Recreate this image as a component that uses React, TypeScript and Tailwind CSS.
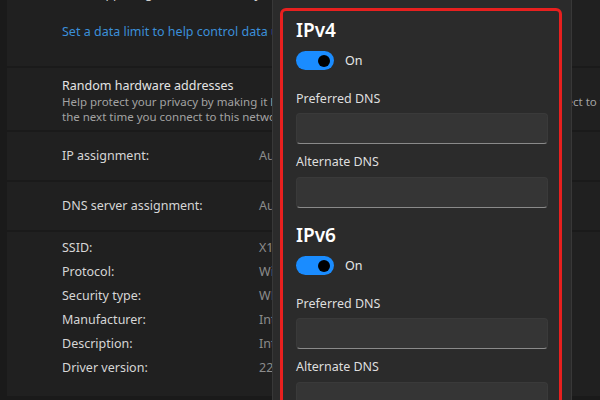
import React from 'react';

const rows: [string, string][] = [
  ['SSID:', 'X1 Carbon Home'],
  ['Protocol:', 'Wi-Fi 6 (802.11ax)'],
  ['Security type:', 'WPA2-Personal'],
  ['Manufacturer:', 'Intel Corporation'],
  ['Description:', 'Intel(R) Wi-Fi 6 AX201 160MHz'],
  ['Driver version:', '22.150.0.3'],
];

const Toggle = () => (
  <div className="flex items-center gap-[11px]">
    <div className="w-[38px] h-[19px] rounded-full bg-[#1a8cff] flex items-center justify-end pr-[4px]">
      <div className="w-[12px] h-[12px] rounded-full bg-black" />
    </div>
    <span className="text-[12.5px] leading-[18px] text-[#e8e8e8]">On</span>
  </div>
);

const DnsField = ({ label, gap }: { label: string; gap: string }) => (
  <div className="flex flex-col">
    <span className="text-[12.5px] leading-[18px] text-[#dedede]">{label}</span>
    <div className={`${gap} h-[31px] w-[252px] rounded-[4px] bg-[#353535] border border-[#3a3a3a] border-b-[#8a8a8a]`} />
  </div>
);

const Section = ({ title, top }: { title: string; top: string }) => (
  <div className={`flex flex-col ${top}`}>
    <h2 className="text-[19px] leading-[28px] font-semibold text-white">{title}</h2>
    <div className="mt-[7px]">
      <Toggle />
    </div>
    <div className="mt-[20px]">
      <DnsField label="Preferred DNS" gap="mt-[5px]" />
    </div>
    <div className="mt-[9px]">
      <DnsField label="Alternate DNS" gap="mt-[6px]" />
    </div>
  </div>
);

export default function App() {
  return (
    <div
      className="relative w-[600px] h-[400px] overflow-hidden bg-[#1a1a1a]"
      style={{ fontFamily: '"Noto Sans", "Open Sans", sans-serif' }}
    >
      <div className="flex flex-col gap-[2px] pl-[7px]">
        <div className="h-[66px] bg-[#202020] pl-[55px] flex flex-col whitespace-nowrap">
          <span className="-mt-[15px] text-[12.5px] leading-[18px] text-[#cfcfcf]">
            Some apps might work differently to reduce data usage when you're connected to this network
          </span>
          <span className="mt-[20px] text-[12.5px] leading-[18px] text-[#3b8fd9]">
            Set a data limit to help control data usage on this network
          </span>
        </div>
        <div className="h-[62px] bg-[#202020] pl-[55px] pt-[10px] flex flex-col whitespace-nowrap">
          <span className="text-[12.5px] leading-[16px] text-[#e4e4e4]">Random hardware addresses</span>
          <span className="text-[11.5px] leading-[15px] text-[#a3a3a3]">
            Help protect your privacy by making it harder for people to track your device location. Reconnect to this network to apply
          </span>
          <span className="text-[11.5px] leading-[15px] text-[#a3a3a3]">
            the next time you connect to this network.
          </span>
        </div>
        <div className="h-[48px] bg-[#202020] pl-[55px] flex items-center text-[12.5px] text-[#d6d6d6]">
          <span className="w-[197px]">IP assignment:</span>
          <span className="text-[#8c8c8c]">Automatic (DHCP)</span>
        </div>
        <div className="h-[48px] bg-[#202020] pl-[55px] flex items-center text-[12.5px] text-[#d6d6d6]">
          <span className="w-[197px]">DNS server assignment:</span>
          <span className="text-[#8c8c8c]">Automatic (DHCP)</span>
        </div>
        <div className="h-[164px] bg-[#202020] pl-[55px] pt-[4px] flex flex-col text-[12.5px] text-[#d6d6d6]">
          {rows.map(([k, v]) => (
            <div key={k} className="flex h-[24px] items-center">
              <span className="w-[197px]">{k}</span>
              <span className="text-[#8c8c8c]">{v}</span>
            </div>
          ))}
        </div>
      </div>

      <div className="absolute left-[272px] top-0 w-[300px] h-[420px] bg-[#2b2b2b] border-x border-[#383838] pt-[8px] pl-[7px] pr-[9px]">
        <div className="h-[420px] border-[3px] border-[#e8201f] rounded-[6px] pl-[13px] pt-[5px]">
          <Section title="IPv4" top="" />
          <Section title="IPv6" top="mt-[13px]" />
        </div>
      </div>
    </div>
  );
}
